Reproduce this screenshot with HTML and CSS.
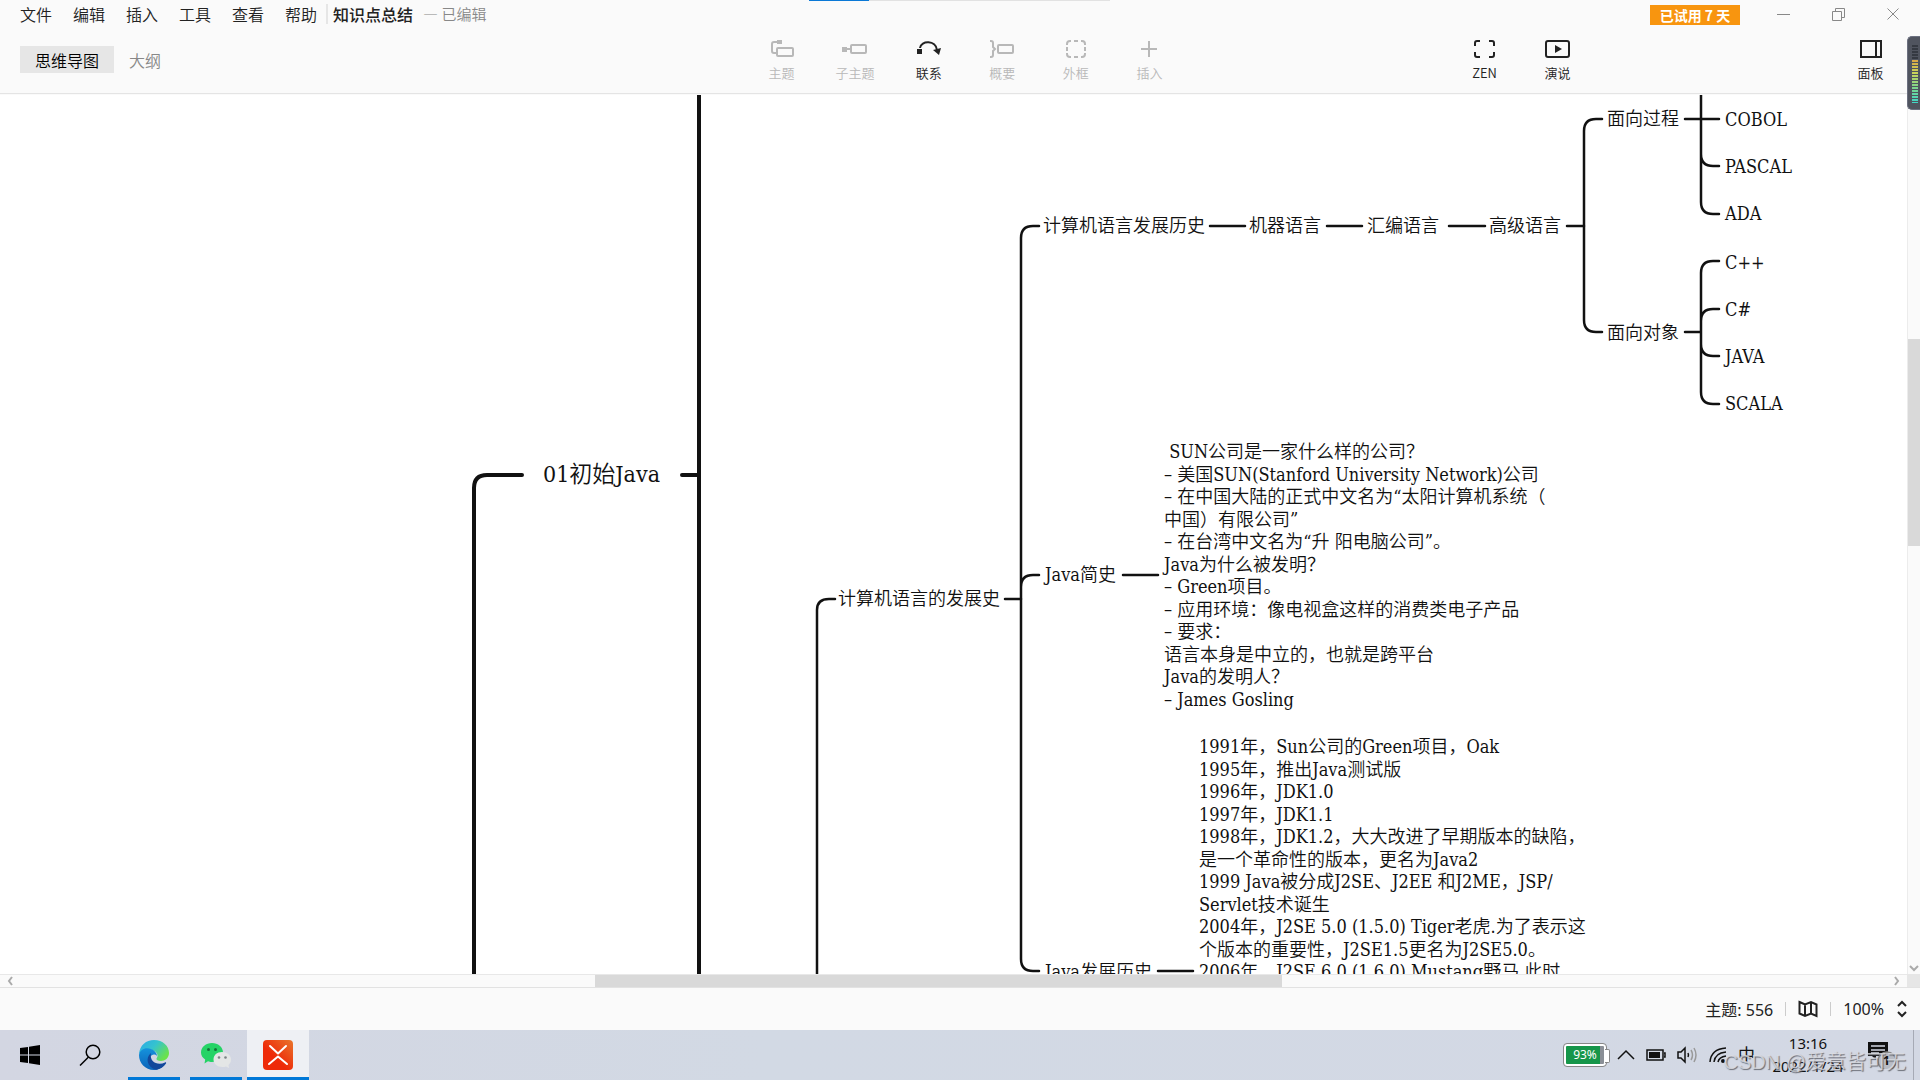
FILE: index.html
```html
<!DOCTYPE html>
<html lang="zh-CN">
<head>
<meta charset="utf-8">
<title>知识点总结</title>
<link rel="stylesheet" href="styles.css">
</head>
<body>
<div class="desktop">
  <header class="header">
    <div class="progress"><div class="progress-done"></div></div>
    <div class="titlebar">
      <nav class="menu">
        <button>文件</button><button>编辑</button><button>插入</button><button>工具</button><button>查看</button><button>帮助</button>
      </nav>
      <h1 class="doc-title">知识点总结</h1>
      <span class="doc-state">— 已编辑</span>
      <button class="trial">已试用 7 天</button>
      <div class="window-controls">
        <button aria-label="最小化"><svg width="14" height="14"><path d="M1 7.500H14"/></svg></button>
        <button aria-label="还原"><svg width="14" height="14"><path d="M1.500 4.500H10.500V13.500H1.500ZM4.500 4V1.500H13.500V10.500H11"/></svg></button>
        <button aria-label="关闭"><svg width="14" height="14"><path d="M1.500 1.500L12.500 12.500M12.500 1.500L1.500 12.500"/></svg></button>
      </div>
    </div>
    <div class="toolbar">
      <div class="views">
        <button class="view active">思维导图</button>
        <button class="view">大纲</button>
      </div>
      <div class="tools">
        <button class="tool" disabled><svg width="26" height="20"><path d="M9 3H5Q3 3 3 5V12Q3 14 5 14H8"/><rect x="8" y="9" width="16" height="8" rx="1"/><path class="solid" d="M8 1H13V5H8Z"/></svg>主题</button>
        <button class="tool" disabled><svg width="26" height="20"><rect x="9" y="6" width="15" height="8" rx="1"/><path d="M4 10H9"/><path class="solid" d="M0 8H5V13H0Z"/></svg>子主题</button>
        <button class="tool"><svg width="26" height="20"><path d="M4 9C5 1 20 1 21 11"/><path class="solid" d="M1 10H6V15H1ZM17 11L25 9L23 16Z"/></svg>联系</button>
        <button class="tool" disabled><svg width="26" height="20"><path d="M1 2H2Q4 2 4 4V8L6 10L4 12V16Q4 18 2 18H1"/><rect x="9" y="6" width="15" height="8" rx="1"/></svg>概要</button>
        <button class="tool" disabled><svg width="26" height="20"><path d="M4 6V5Q4 2 7 2H8M11 2H15M18 2H19Q22 2 22 5V6M22 8V12M22 14V15Q22 18 19 18H18M15 18H11M8 18H7Q4 18 4 15V14M4 12V8"/></svg>外框</button>
        <button class="tool" disabled><svg width="26" height="20"><path d="M5 10H21M13 2V18"/></svg>插入</button>
      </div>
      <div class="modes">
        <button class="tool"><svg width="26" height="20"><path d="M3 7V4Q3 2 5 2H8M17 2H20Q22 2 22 4V7M22 13V16Q22 18 20 18H17M8 18H5Q3 18 3 16V13"/></svg>ZEN</button>
        <button class="tool"><svg width="26" height="20"><rect x="1" y="2" width="23" height="16" rx="2"/><path class="solid" d="M10 6L17 10L10 14Z"/></svg>演说</button>
        <button class="tool panel"><svg width="26" height="20"><path d="M3 2H23V18H3ZM18 2V18"/></svg>面板</button>
      </div>
    </div>
  </header>

  <div class="level-meter"></div>

  <main class="editor">
    <div class="canvas">
      <svg class="links" aria-hidden="true">
        <g class="thick">
          <path d="M474 1000V488Q474 475 487 475H522M682 475H699M699 60V1000"/>
        </g>
        <g class="thin">
          <path d="M817 1000V610Q817 599 829 599H835M1005 599H1021"/>
          <path d="M1039 226H1033Q1021 226 1021 238V959Q1021 971 1033 971H1039M1021 587Q1021 575 1033 575H1039"/>
          <path d="M1210 226H1245M1327 226H1362M1449 226H1485M1567 226H1584"/>
          <path d="M1602 119H1596Q1584 119 1584 131V320Q1584 332 1596 332H1602"/>
          <path d="M1685 119H1719M1701 60V202Q1701 214 1713 214H1719M1701 154Q1701 166 1713 166H1719"/>
          <path d="M1685 332H1701M1719 261H1713Q1701 261 1701 273V392Q1701 404 1713 404H1719M1701 321Q1701 309 1713 309H1719M1701 344Q1701 356 1713 356H1719"/>
          <path d="M1123 575H1158M1158 971H1193"/>
        </g>
      </svg>
      <div class="node main-topic n-start">01初始Java</div>
      <div class="node n-dev">计算机语言的发展史</div>
      <div class="node n-history">计算机语言发展历史</div>
      <div class="node n-machine">机器语言</div>
      <div class="node n-asm">汇编语言</div>
      <div class="node n-high">高级语言</div>
      <div class="node n-proc">面向过程</div>
      <div class="node n-oop">面向对象</div>
      <ul class="node leaves n-proc-list"><li>COBOL</li><li>PASCAL</li><li>ADA</li></ul>
      <ul class="node leaves n-oop-list"><li>C++</li><li>C#</li><li>JAVA</li><li>SCALA</li></ul>
      <div class="node n-brief">Java简史</div>
      <div class="node n-brief-text"> SUN公司是一家什么样的公司？
– 美国SUN(Stanford University Network)公司
– 在中国大陆的正式中文名为“太阳计算机系统（
中国）有限公司”
– 在台湾中文名为“升 阳电脑公司”。
Java为什么被发明？
– Green项目。
– 应用环境：像电视盒这样的消费类电子产品
– 要求：
语言本身是中立的，也就是跨平台
Java的发明人？
– James Gosling</div>
      <div class="node n-java">Java发展历史</div>
      <div class="node n-java-text">1991年，Sun公司的Green项目，Oak
1995年，推出Java测试版
1996年，JDK1.0
1997年，JDK1.1
1998年，JDK1.2，大大改进了早期版本的缺陷，
是一个革命性的版本，更名为Java2
1999 Java被分成J2SE、J2EE 和J2ME，JSP/
Servlet技术诞生
2004年，J2SE 5.0 (1.5.0) Tiger老虎.为了表示这
个版本的重要性，J2SE1.5更名为J2SE5.0。
2006年，J2SE 6.0 (1.6.0) Mustang野马.此时</div>
    </div>
    <div class="vscroll">
      <div class="vtrack"><div class="vthumb"></div></div>
      <svg width="12" height="12"><path d="M2 4L6 8L10 4"/></svg>
    </div>
    <div class="hscroll">
      <svg width="12" height="12"><path d="M8 2L5 6L8 10"/></svg>
      <div class="htrack"><div class="hthumb"></div></div>
      <svg width="12" height="12"><path d="M4 2L7 6L4 10"/></svg>
    </div>
    <div class="corner"></div>
  </main>

  <footer class="status">
    <span>主题: 556</span>
    <i class="sep"></i>
    <button aria-label="导航"><svg width="20" height="18"><path d="M1.500 2L7 4.500L13 2L18.500 4.500V16L13 13.500L7 16L1.500 13.500ZM7 4.500V16M13 2V13.500"/></svg></button>
    <i class="sep"></i>
    <span>100%</span>
    <button aria-label="缩放"><svg width="12" height="18"><path d="M2 6L6 2L10 6M2 12L6 16L10 12"/></svg></button>
  </footer>

  <div class="taskbar">
    <button class="task" aria-label="开始"><svg width="20" height="20"><path d="M0 3L8 2V9.500H0ZM9 1.800L20 0V9.500H9ZM0 10.500H8V18L0 17ZM9 10.500H20V20L9 18.200Z"/></svg></button>
    <button class="task search" aria-label="搜索"><svg width="22" height="22" fill="none" stroke="#000" stroke-width="1.500"><circle cx="14" cy="8" r="6.800"/><path d="M9.500 13L1 21.500"/></svg></button>
    <button class="task open" aria-label="Edge"><svg width="30" height="30" viewBox="0 0 30 30">
      <defs>
        <linearGradient id="e1" x1="0" y1="0" x2="1" y2="0.600"><stop offset="0" stop-color="#2ba9e8"/><stop offset="0.500" stop-color="#35c3cf"/><stop offset="1" stop-color="#6be24a"/></linearGradient>
        <linearGradient id="e2" x1="0" y1="0" x2="0" y2="1"><stop offset="0" stop-color="#1592dc"/><stop offset="1" stop-color="#0b63b9"/></linearGradient>
      </defs>
      <path fill="url(#e1)" d="M0 14C1 5 7 0 15 0C24 0 30 6 30 13C30 18 26 21 22 21C19 21 17 20 17.500 18.500C18.500 17 19 15.500 18 13.500C15 8 5 8 0 14Z"/>
      <path fill="url(#e2)" d="M0 15C1 9 7 7 12 9C15 10 18 13 18 16C14 12 9 17 11 22C13 27 20 29 26 24C23 28 19 30 15 30C6 30 0 23 0 15Z"/>
      <path fill="#12489b" d="M12 13C6 18 8 27 17 29.800C21 29 25 27 27 23.500C27.500 22.500 26.500 22 26 22.500C19 26 10 22 12 13Z"/>
    </svg></button>
    <button class="task open" aria-label="微信"><svg width="30" height="26" viewBox="0 0 30 26">
      <path fill="#25d366" d="M11 1C17 1 22 5 22 10.500C22 16 17 20 11 20C9.500 20 8 19.700 7 19.300L3.500 21.500L4.200 17.500C1.500 15.800 0 13.500 0 10.500C0 5 5 1 11 1Z"/>
      <circle cx="7.500" cy="7.500" r="1.500" fill="#15713a"/><circle cx="14.500" cy="7.500" r="1.500" fill="#15713a"/>
      <path fill="#e4e6e6" d="M21 10C26 10 30 13 30 17.500C30 20 29 21.500 27.500 23L28 26L25 24.500C18 26.500 12.500 22.500 12.500 17.500C12.500 13 16 10 21 10Z"/>
      <circle cx="18" cy="15.500" r="1.300" fill="#7d8486"/><circle cx="24.500" cy="15.500" r="1.300" fill="#7d8486"/>
    </svg></button>
    <button class="task open current" aria-label="XMind"><svg width="30" height="30" viewBox="0 0 30 30">
      <defs><linearGradient id="x1" x1="1" y1="0" x2="0.400" y2="0.600"><stop offset="0" stop-color="#e8762c"/><stop offset="1" stop-color="#ee2a08"/></linearGradient></defs>
      <rect width="30" height="30" rx="4" fill="url(#x1)"/>
      <path fill="none" stroke="#fff" stroke-width="2" stroke-linecap="round" stroke-linejoin="round" d="M7 6L15 13.500L23 6M6 24L15 16.500L24 24"/>
    </svg></button>

    <div class="tray">
      <span class="battery-level">93%</span>
      <svg width="18" height="12"><path d="M1 10L9 2L17 10"/></svg>
      <svg width="20" height="12"><path d="M1 1H17V11H1ZM18 4H19V8H18"/><path class="fill" d="M3 3H14V9H3Z"/></svg>
      <svg width="21" height="18"><path d="M1 6H4L8 2V16L4 12H1ZM11 7Q12 9 11 11"/><path class="faint" d="M14 4Q17 9 14 14M17 2Q21 9 17 16"/></svg>
      <svg width="18" height="18"><path d="M1 16Q2 3 17 2M5 16Q6 7 17 6M9 16Q10 11 17 10"/><circle class="fill" cx="14" cy="15" r="2"/></svg>
      <span class="ime">中</span>
      <div class="clock"><time>13:16</time><time>2022/1/24</time></div>
      <button class="notice" aria-label="通知"><svg width="32" height="28"><path class="fill" d="M1 1H21V15H9V19L5 15H1Z"/><path class="rule" d="M4 5H18M4 9H18M4 12H12"/><circle cx="20" cy="20" r="9"/></svg><b>1</b></button>
    </div>
    <div class="watermark">CSDN @爱意皆可无</div>
  </div>
</div>
</body>
</html>
```
FILE: styles.css
```css
* { box-sizing: border-box; }
body {
  margin: 0;
  font-family: "Noto Sans", "Noto Sans CJK SC", sans-serif;
  font-size: 16px;
  color: #222;
}
button {
  margin: 0;
  padding: 0;
  border: 0;
  background: none;
  font: inherit;
  color: inherit;
}
svg { display: block; }

.desktop {
  position: relative;
  display: flex;
  flex-direction: column;
  height: 100vh;
  overflow: hidden;
  background: #fafafa;
}

/* header */
.header { position: relative; border-bottom: 1px solid #e4e4e4; }
.progress {
  position: absolute;
  top: 0;
  left: 809px;
  width: 301px;
  height: 1px;
  background: #e2e2e2;
}
.progress-done { width: 60px; height: 1px; background: #0a78d6; }
.titlebar {
  display: flex;
  align-items: center;
  height: 28px;
  padding: 0 20px;
  font-family: "Noto Sans CJK SC", sans-serif;
  font-weight: 350;
}
.menu {
  display: flex;
  gap: 21px;
  padding-right: 9px;
  border-right: 2px solid #e6e6e6;
  line-height: 20px;
}
.doc-title { margin: 0 10px 0 5px; font-size: 16px; font-weight: 500; line-height: 20px; }
.doc-state { font-size: 15px; line-height: 20px; color: #888; }
.trial {
  width: 90px;
  height: 20px;
  margin: 2px 36px 0 auto;
  background: #f8950f;
  color: #fff;
  font-size: 14px;
  font-weight: 700;
  line-height: 20px;
}
.window-controls { display: flex; gap: 41px; }
.window-controls svg { fill: none; stroke: #888; }

.toolbar {
  display: grid;
  grid-template-columns: 1fr auto 1fr;
  height: 65px;
  padding: 0 20px;
}
.views { display: flex; padding-top: 18px; font-family: "Noto Sans CJK SC", sans-serif; font-weight: 350; }
.view { height: 27px; padding: 0 15px; line-height: 26px; color: #888; }
.view.active { background: #e6e6e6; color: #000; }
.tools { display: flex; width: 452px; padding-left: 11px; justify-content: space-between; }
.tool {
  display: flex;
  flex-direction: column;
  align-items: center;
  width: 73px;
  padding-top: 11px;
  gap: 4px;
  font-family: "Noto Sans CJK SC", sans-serif;
  font-size: 13px;
  font-weight: 350;
  line-height: 20px;
}
.tool:disabled { color: #b8b8b8; }
.tool svg { fill: none; stroke: currentColor; stroke-width: 2; color: #222; }
.tool:disabled svg { color: #b8b8b8; }
.tool .solid { fill: currentColor; stroke: none; }
.modes { display: flex; width: 459px; margin-left: auto; margin-right: -7px; }
.panel { margin-left: auto; }

.level-meter {
  position: absolute;
  z-index: 2;
  top: 36px;
  right: 0;
  width: 13px;
  height: 74px;
  border: 1px solid #6c7080;
  border-right: 0;
  border-radius: 5px 0 0 5px;
  background: #50545f;
}
.level-meter::after {
  content: "";
  position: absolute;
  top: 8px;
  left: 4px;
  width: 6px;
  height: 58px;
  background:
    repeating-linear-gradient(transparent 0 2px, #50545f 2px 3px),
    linear-gradient(#353942 0 15px, #d9a545 15px, #c9d45a 28px, #7fd68a 42px, #3fd6c8);
}

/* editor */
.editor {
  flex: 1;
  min-height: 0;
  display: grid;
  grid-template: minmax(0, 1fr) 13px / minmax(0, 1fr) 13px;
  border-bottom: 1px solid #e2e2e2;
}
.canvas { position: relative; overflow: hidden; background: #fff; margin-top: 1px; }
.links { position: absolute; top: -95px; left: 0; width: 100%; height: 1080px; }
.links path { fill: none; stroke: #111; stroke-linecap: round; }
.thick { stroke-width: 4; }
.thin { stroke-width: 2.5; }
.node {
  position: absolute;
  margin: 0;
  font-family: "DejaVu Serif Condensed", "Noto Sans CJK SC", serif;
  font-size: 18px;
  font-weight: 350;
  line-height: 1.25;
  white-space: pre;
  color: #111;
}
.main-topic { font-size: 23px; }
.n-start { left: 543px; top: 365px; }
.n-dev { left: 838px; top: 493px; }
.n-history { left: 1043px; top: 120px; }
.n-machine { left: 1249px; top: 120px; }
.n-asm { left: 1367px; top: 120px; }
.n-high { left: 1489px; top: 120px; }
.n-proc { left: 1607px; top: 13px; }
.n-oop { left: 1607px; top: 227px; }
.leaves { display: grid; grid-auto-rows: 47px; padding: 0; list-style: none; white-space: nowrap; align-items: center; }
.n-proc-list { left: 1725px; top: 2px; }
.n-oop-list { left: 1725px; top: 145px; }
.n-brief { left: 1045px; top: 469px; }
.n-brief-text { left: 1164px; top: 346px; }
.n-java { left: 1045px; top: 866px; }
.n-java-text { left: 1199px; top: 641px; }

.vscroll { display: flex; flex-direction: column; border-left: 1px solid #ececec; }
.vscroll svg, .hscroll svg { flex: none; fill: none; stroke: #aaa; stroke-width: 2; }
.vtrack { flex: 1; padding-top: 245px; }
.vthumb { height: 207px; background: #d9d9d9; }
.hscroll { display: flex; align-items: center; padding: 0 4px; border-top: 1px solid #e8e8e8; }
.htrack { flex: 1; padding-left: 579px; }
.hthumb { width: 687px; height: 12px; background: #d9d9d9; }
.corner { background: #e6e6e6; }

/* status bar */
.status {
  display: flex;
  align-items: center;
  justify-content: flex-end;
  gap: 12px;
  height: 42px;
  padding: 0 12px;
}
.status svg { fill: none; stroke: #222; stroke-width: 2; }
.sep { width: 1px; height: 14px; background: #ccc; }

/* taskbar */
.taskbar {
  position: relative;
  display: flex;
  height: 50px;
  padding-right: 6px;
  background: linear-gradient(90deg, #d3d6e2, #d2d9e4 40%, #d3d8e4);
}
.task { display: grid; place-items: center; width: 60px; }
.search { margin-right: 3px; }
.task.open { position: relative; width: 62px; }
.task.open::after {
  content: "";
  position: absolute;
  inset: auto 5px 0;
  height: 3px;
  background: #0078d7;
}
.task.current { background: #eef0f4; }
.task.current::after { inset: auto 0 0; }
.tray {
  display: flex;
  align-items: center;
  gap: 11px;
  margin-left: auto;
  padding-right: 14px;
  border-right: 1px solid #a6aab5;
  color: #111;
}
.tray svg { fill: none; stroke: #111; stroke-width: 1.5; }
.tray .fill { fill: #111; stroke: none; }
.tray .faint { stroke: #999; }
.battery-level {
  position: relative;
  width: 42px;
  height: 22px;
  border: 2px solid #fff;
  border-radius: 3px;
  outline: 1px solid #888;
  background: linear-gradient(90deg, #16964a 34px, #8a8f96 34px);
  color: #fff;
  font-size: 12px;
  line-height: 18px;
  text-align: center;
}
.battery-level::after {
  content: "";
  position: absolute;
  top: 3px;
  right: -6px;
  width: 4px;
  height: 12px;
  border: 1px solid #888;
  border-left: 0;
  border-radius: 0 2px 2px 0;
  background: #fff;
}
.ime { font-size: 17px; line-height: 24px; }
.clock { display: flex; flex-direction: column; width: 84px; margin-right: 6px; text-align: center; font-size: 15px; line-height: 23px; }
.notice { position: relative; }
.notice .rule { stroke: #d3d8e4; }
.notice circle { fill: #b9bcc4; stroke: #888; }
.notice b { position: absolute; left: 16px; top: 12px; font-size: 12px; line-height: 16px; }
.watermark {
  position: absolute;
  right: 14px;
  bottom: 4px;
  font-family: "Liberation Sans", "Noto Sans CJK SC", sans-serif;
  font-size: 20px;
  line-height: 28px;
  color: rgba(222, 223, 228, 0.8);
  text-shadow: 1px 1px 1px rgba(80, 82, 90, 0.8);
}
```
